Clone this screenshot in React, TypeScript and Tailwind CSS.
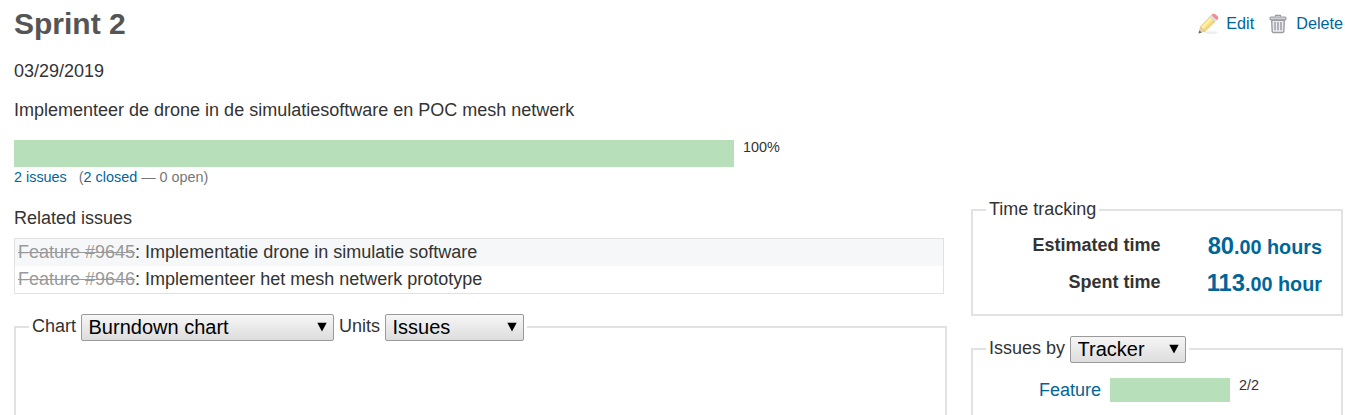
import type { ReactNode } from "react";

function PencilIcon() {
  return (
    <svg width="22" height="22" viewBox="0 0 22 22" className="shrink-0">
      <ellipse cx="14" cy="19.6" rx="6.5" ry="1.4" fill="#ededed" />
      <path d="M1.8 20 3.6 13.8 8.2 18.2Z" fill="#ecd2a8" stroke="#cdb690" strokeWidth=".6" />
      <path d="M1.5 20.4 2.4 17.4 4.7 19.5Z" fill="#666" />
      <path d="M3.6 13.8 13 3.6 18.2 8.4 8.2 18.2Z" fill="#fbe58a" stroke="#e2c576" strokeWidth=".8" />
      <path d="M5.2 14.8 14.4 5" stroke="#fff5bd" strokeWidth="1.6" />
      <path d="M7.6 17.1 17.2 7.6" stroke="#f0cc70" strokeWidth="1.2" />
      <path d="M12.9 3.8 14.6 2.1 19.8 6.8 18.1 8.5Z" fill="#e1e4e9" stroke="#c2c7cf" strokeWidth=".5" />
      <path d="M14.6 2.1 15.6 1.2Q17 .5 18.2 1.4L20.6 3.6Q21.4 4.7 20.7 5.9L19.8 6.8Z" fill="#f68a90" stroke="#ee7f87" strokeWidth=".5" />
    </svg>
  );
}

function TrashIcon() {
  return (
    <svg width="18" height="20" viewBox="0 0 18 20" fill="none" className="shrink-0">
      <path d="M6.5 2.8V1.4h5v1.4" stroke="#9a9ba4" strokeWidth="1.2" />
      <rect x="1" y="3" width="16" height="3" rx="1" fill="#d0d0d6" stroke="#9a9ba4" strokeWidth="1.1" />
      <path d="M2.7 6.3h12.6l-.5 10.9q-.1 1.3-1.4 1.3H4.6q-1.3 0-1.4-1.3Z" fill="#ececf0" stroke="#9a9ba4" strokeWidth="1.4" />
      <path d="M6 8v8.2M9 8v8.2M12 8v8.2" stroke="#92939c" strokeWidth="1.3" />
    </svg>
  );
}

function Select({ options, className }: { options: string[]; className: string }) {
  return (
    <span className={`relative inline-flex h-[27px] ${className}`}>
      <select className="h-full w-full appearance-none rounded-[2px] border border-[#9a9a9a] bg-linear-to-b from-[#f6f6f6] to-[#dddddd] pl-[6.5px] text-[20px] leading-[25px] text-black">
        {options.map((o) => (
          <option key={o}>{o}</option>
        ))}
      </select>
      <svg width="10" height="10" viewBox="0 0 10 10" className="pointer-events-none absolute top-[8px] right-[7.5px]">
        <path d="M.3.8h9.4L5 9.6Z" fill="#000" />
      </svg>
    </span>
  );
}

function Link({ children, className = "" }: { children: ReactNode; className?: string }) {
  return (
    <a href="#" className={`text-[#006699] ${className}`}>
      {children}
    </a>
  );
}

function IssueRow({ id, title, className = "" }: { id: string; title: string; className?: string }) {
  return (
    <li className={`h-[27px] pl-[3px] leading-[27px] ${className}`}>
      <a href="#" className="text-[#999] line-through">
        Feature #{id}
      </a>
      : {title}
    </li>
  );
}

function TimeRow({ label, whole, rest }: { label: string; whole: string; rest: string }) {
  return (
    <div className="flex h-[37px] font-bold">
      <div className="w-[174.5px] text-right leading-[27px]">{label}</div>
      <div className="flex-1 text-right leading-[28px] text-[#006699]">
        <span className="text-[23.76px]">{whole}</span>
        <span className="text-[19.8px]">{rest}</span>
      </div>
    </div>
  );
}

export default function App() {
  return (
    <main className="h-[415px] w-[1345px] overflow-hidden bg-white pr-[2px] pl-[14px] font-['Liberation_Sans',Arial,sans-serif] text-[18px] leading-[27px] text-[#333]">
      <header className="flex h-[58px] justify-between">
        <h1 className="pt-[6px] text-[30px] leading-[36px] font-bold text-[#555]">Sprint 2</h1>
        <nav className="flex h-[35px] pt-[13px] text-[16.2px] leading-[20px]">
          <PencilIcon />
          <Link className="ml-[7px]">Edit</Link>
          <span className="ml-[15px] flex pt-px">
            <TrashIcon />
          </span>
          <Link className="ml-[9px]">Delete</Link>
        </nav>
      </header>
      <div className="flex justify-between">
        <section className="w-[933px]">
          <p>03/29/2019</p>
          <p className="mt-[12px]">Implementeer de drone in de simulatiesoftware en POC mesh netwerk</p>
          <div className="mt-[16px] flex h-[27px]">
            <div className="w-[720px] bg-[#b7dfba]" />
            <span className="ml-[9px] text-[14.4px] leading-[15px]">100%</span>
          </div>
          <p className="h-[20px] text-[14.4px] leading-[20px] text-[#777]">
            <Link>2 issues</Link>
            <span className="ml-[12px]">
              (<Link>2 closed</Link> — 0 open)
            </span>
          </p>
          <h2 className="mt-[18px]">Related issues</h2>
          <ul className="mt-[6px] w-[930px] border border-[#e2e2e2]">
            <IssueRow id="9645" title="Implementatie drone in simulatie software" className="bg-[#f6f7f8]" />
            <IssueRow id="9646" title="Implementeer het mesh netwerk prototype" />
          </ul>
          <fieldset className="mt-[20px] h-[120px] border-2 border-[#e2e2e2] pl-[13px]">
            <legend className="flex h-[26px] px-[3px]">
              <span className="-mt-[1px]">Chart</span>
              <Select options={["Burndown chart", "Burnup chart"]} className="ml-[5px] w-[253px]" />
              <span className="-mt-[1px] ml-[5px]">Units</span>
              <Select options={["Issues", "Hours"]} className="ml-[5px] w-[139px]" />
            </legend>
          </fieldset>
        </section>
        <aside className="w-[372px] pt-[138px]">
          <fieldset className="h-[120px] border-2 border-[#e2e2e2] pr-[19px] pl-[13px]">
            <legend className="px-[3px]">Time tracking</legend>
            <div className="pt-[9px]">
              <TimeRow label="Estimated time" whole="80" rest=".00 hours" />
              <TimeRow label="Spent time" whole="113" rest=".00 hour" />
            </div>
          </fieldset>
          <fieldset className="mt-[20px] h-[120px] border-2 border-[#e2e2e2] pl-[13px]">
            <legend className="flex h-[26px] px-[3px]">
              <span className="-mt-[1px]">Issues by</span>
              <Select options={["Tracker", "Status", "Priority"]} className="ml-[5px] w-[116px]" />
            </legend>
            <div className="flex h-[40px] pt-[16px]">
              <Link className="w-[115px] text-right leading-[24px]">Feature</Link>
              <div className="ml-[9px] h-[24px] w-[120px] bg-[#b7dfba]" />
              <span className="ml-[9px] text-[14.4px] leading-[15px]">2/2</span>
            </div>
          </fieldset>
        </aside>
      </div>
    </main>
  );
}
